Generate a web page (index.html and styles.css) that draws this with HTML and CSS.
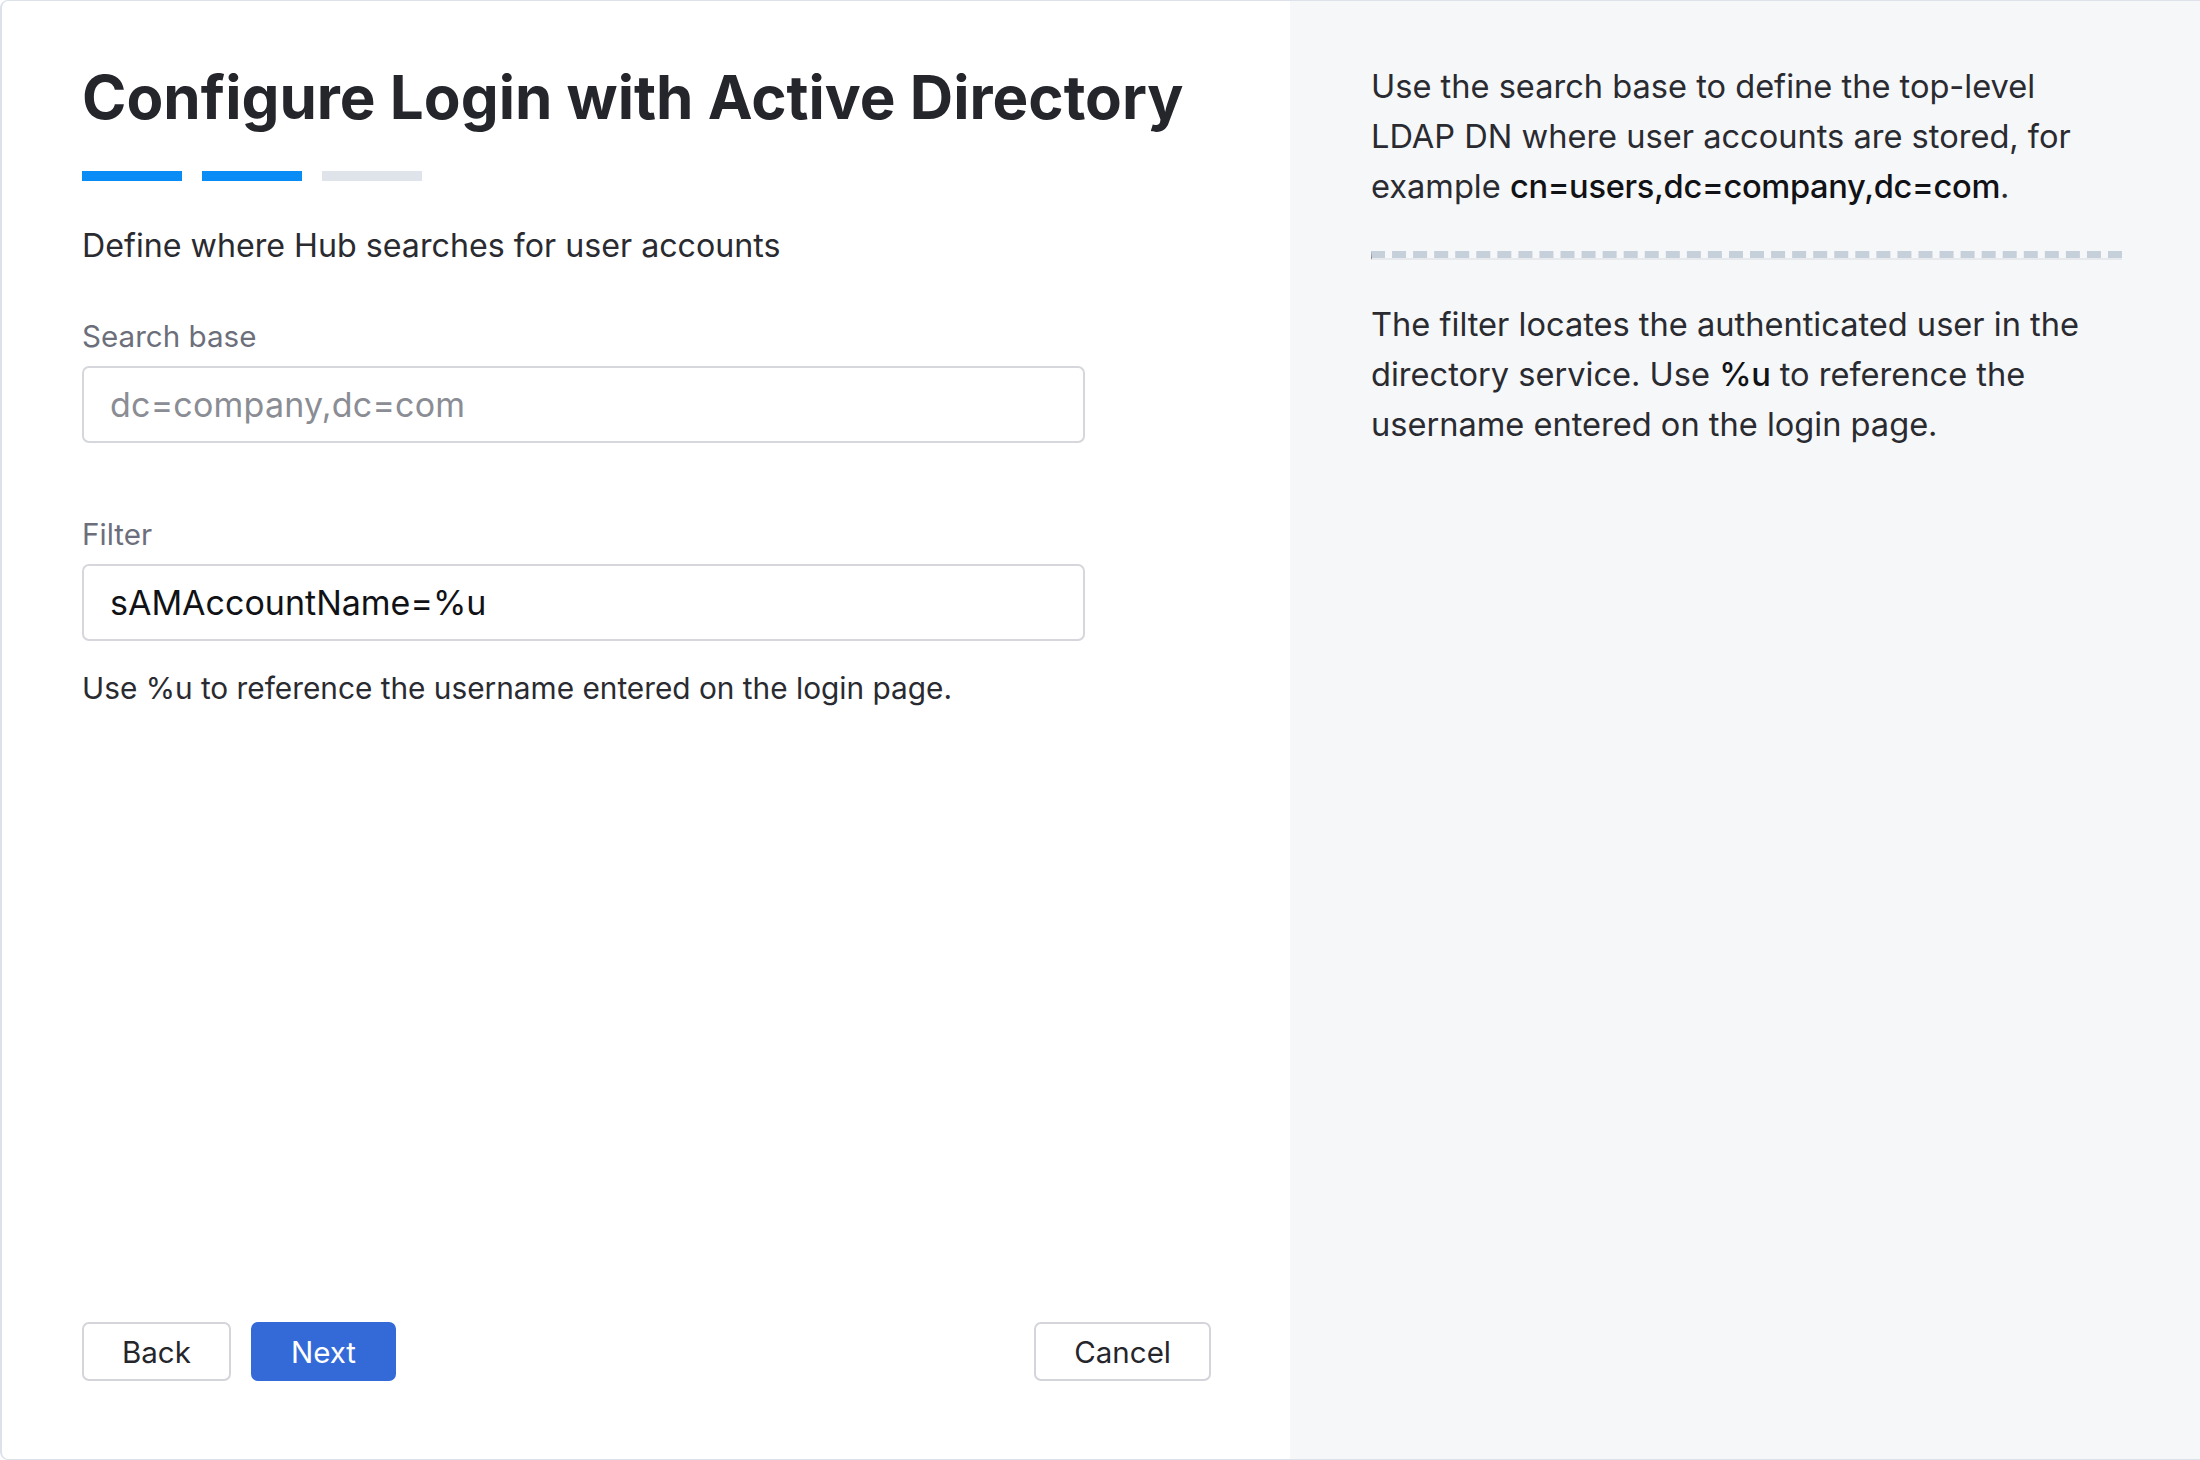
FILE: index.html
```html
<!DOCTYPE html>
<html lang="en">
<head>
<meta charset="utf-8">
<title>Configure Login with Active Directory</title>
<link rel="stylesheet" href="styles.css">
</head>
<body>
<div class="card">
  <main class="main">
    <h1 class="title">Configure Login with Active Directory</h1>
    <div class="steps">
      <span class="step done"></span>
      <span class="step done"></span>
      <span class="step"></span>
    </div>
    <p class="subtitle">Define where Hub searches for user accounts</p>
    <div class="field">
      <label class="label" for="base">Search base</label>
      <input class="input" id="base" type="text" placeholder="dc=company,dc=com">
    </div>
    <div class="field">
      <label class="label" for="filter">Filter</label>
      <input class="input" id="filter" type="text" value="sAMAccountName=%u">
      <p class="help">Use %u to reference the username entered on the login page.</p>
    </div>
    <div class="actions">
      <button class="btn" type="button">Back</button>
      <button class="btn primary" type="button">Next</button>
      <button class="btn cancel" type="button">Cancel</button>
    </div>
  </main>
  <aside class="side">
    <p class="note">Use the search base to define the top-level LDAP DN where user accounts are stored, for example <strong>cn=users,dc=company,dc=com</strong>.</p>
    <hr class="divider">
    <p class="note">The filter locates the authenticated user in the directory service. Use <strong>%u</strong> to reference the username entered on the login page.</p>
  </aside>
</div>
</body>
</html>
```

FILE: styles.css
```css
* { box-sizing: border-box; }
html, body { margin: 0; padding: 0; }
body {
  width: 2200px;
  height: 1460px;
  overflow: hidden;
  background: #ffffff;
  font-family: Inter, "Noto Sans", sans-serif;
  color: #2a2b31;
}
.card {
  display: flex;
  width: 2210px;
  height: 1460px;
  border: 1px solid #dde2ea;
  border-left-width: 2px;
  border-radius: 8px;
  overflow: hidden;
  background: #fff;
}
.main {
  width: 1288px;
  flex: none;
  display: flex;
  flex-direction: column;
  padding: 60px 79px 78px 80px;
}
.title {
  margin: 0;
  font-size: 60.1px;
  line-height: 72px;
  font-weight: 700;
  color: #25262c;
  white-space: nowrap;
}
.steps {
  display: flex;
  gap: 20px;
  margin-top: 38px;
}
.step {
  width: 100px;
  height: 10px;
  background: #dfe3ea;
}
.step.done { background: #0a8cf6; }
.subtitle {
  margin: 45px 0 0;
  font-size: 32.2px;
  line-height: 40px;
  color: #2a2b31;
}
.field {
  display: flex;
  flex-direction: column;
}
.field + .field { margin-top: 73px; }
.subtitle + .field { margin-top: 52px; }
.label {
  font-size: 29.6px;
  line-height: 36px;
  color: #6c6f7b;
  margin-bottom: 12px;
}
.input {
  width: 1003px;
  height: 77px;
  border: 2px solid #d6d7dc;
  border-radius: 7px;
  padding: 0 26px;
  font-family: Inter, "Noto Sans", sans-serif;
  font-size: 34px;
  color: #111216;
  background: #fff;
  outline: none;
}
.input::placeholder { color: #8b8d95; letter-spacing: 0.2px; }
.help {
  margin: 29px 0 0;
  font-size: 29.8px;
  line-height: 36px;
  color: #2a2b31;
}
.actions {
  margin-top: auto;
  display: flex;
  gap: 20px;
}
.btn {
  height: 59px;
  padding: 0 38px;
  border: 2px solid #d4d5db;
  border-radius: 7px;
  background: #fff;
  font-family: Inter, "Noto Sans", sans-serif;
  font-size: 29.5px;
  color: #25262c;
}
.btn.primary {
  background: #336ad8;
  border-color: #336ad8;
  color: #fff;
}
.btn.cancel { margin-left: auto; }
.side {
  flex: 1;
  background: #f6f7f9;
  padding: 60px 0 0 81px;
}
.note {
  width: 745px;
  margin: 0;
  font-size: 32.6px;
  line-height: 50px;
  color: #2a2b31;
}
.note strong {
  font-weight: 500;
  letter-spacing: -0.3px;
  color: #111216;
}
.divider {
  width: 751px;
  margin: 40px 0 39px;
  height: 9px;
  border: 0;
  border-top: 7px dashed #c6d0da;
  border-left: 1px solid #8a8a8a;
  border-bottom: 2px solid #e8e9ec;
}
```
